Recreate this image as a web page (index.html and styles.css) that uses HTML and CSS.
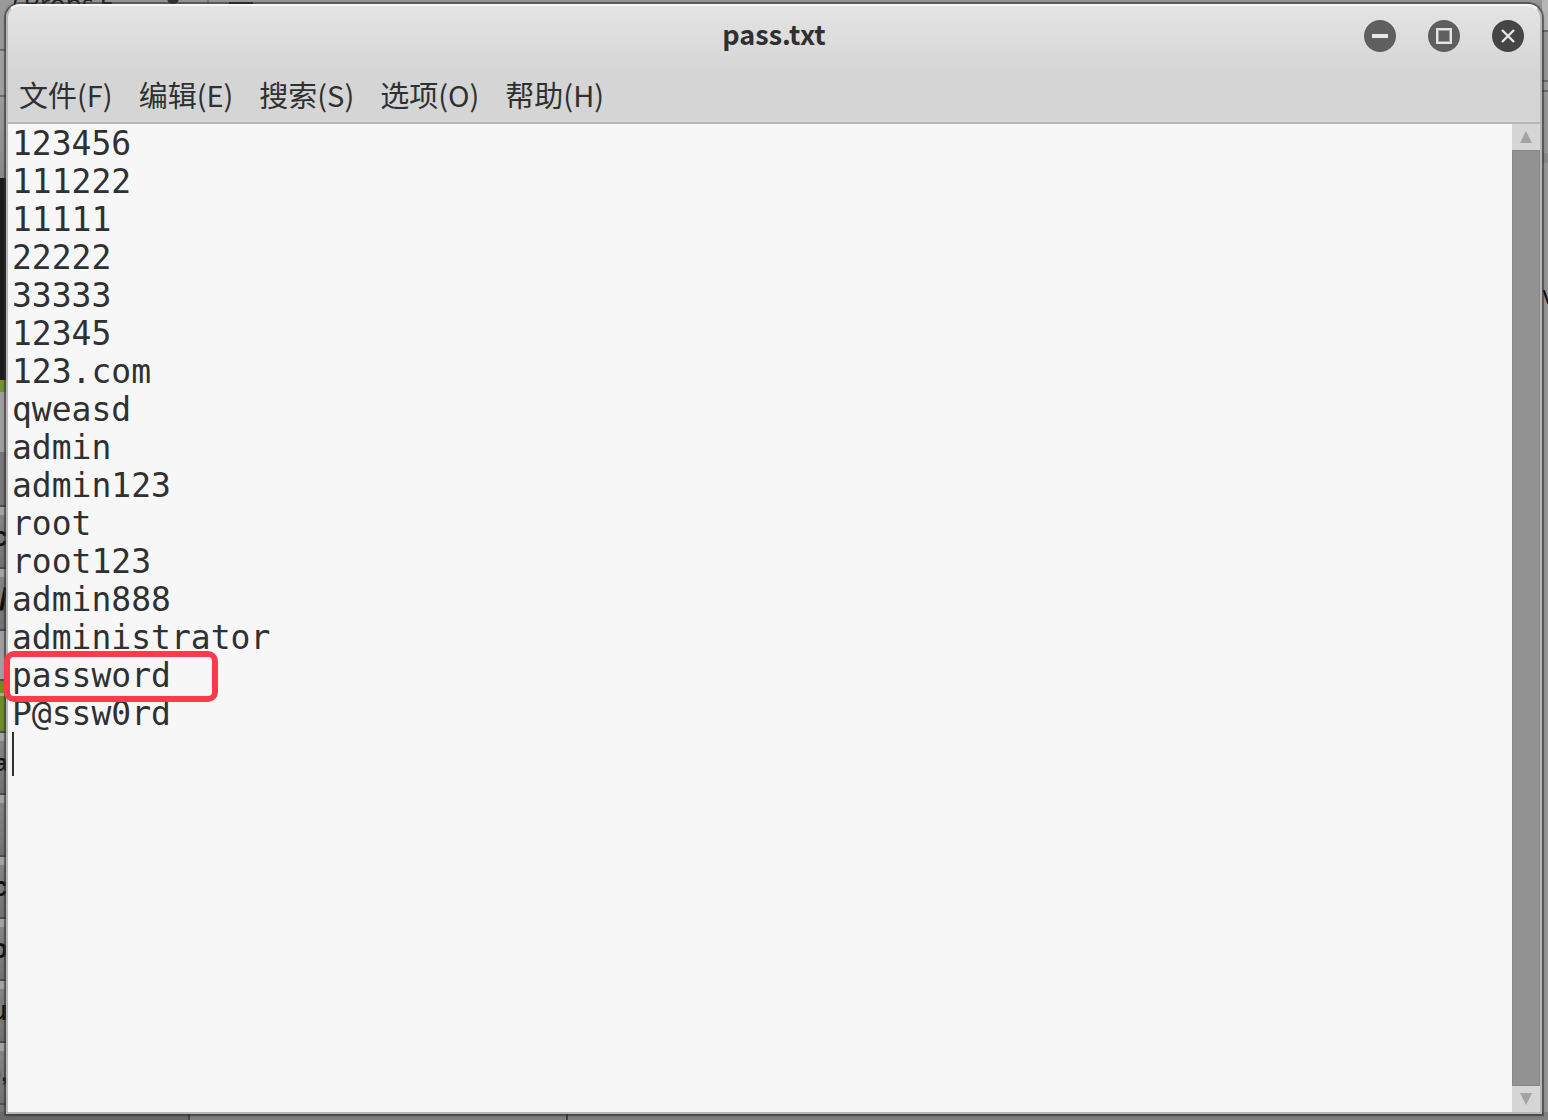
FILE: index.html
```html
<!DOCTYPE html>
<html lang="zh-CN">
<head>
<meta charset="utf-8">
<meta name="viewport" content="width=device-width, initial-scale=1">
<title>pass.txt</title>
<link rel="stylesheet" href="styles.css">
</head>
<body>
<div class="desktop" aria-hidden="true">
  <div class="behind-top"><span>y Props E</span><span class="dot"></span><span class="sep"></span><span class="plus"></span></div>
  <div class="behind-left">
    <div class="pane pane-a"></div>
    <div class="pane pane-b"></div>
    <div class="pane pane-c"></div>
    <div class="pane terminal"></div>
    <div class="pane accent"></div>
    <div class="pane light"></div>
    <div class="pane mid"></div>
    <div class="row">c</div>
    <div class="row slant">/</div>
    <div class="pane blank"></div>
    <div class="pane selected"></div>
    <div class="row tail">a</div>
    <div class="row"></div>
    <div class="row">c</div>
    <div class="row">o</div>
    <div class="row">u</div>
    <div class="row tail">),</div>
    <div class="pane rest"></div>
  </div>
  <div class="behind-right">
    <div class="side side-a"></div>
    <div class="side side-b"></div>
    <div class="side side-c"></div>
    <div class="side side-d"></div>
    <div class="side side-e">v</div>
  </div>
  <div class="behind-bottom"><i class="tab tab-a"></i><i class="tab tab-b"></i></div>
</div>
<main class="window">
  <header class="titlebar">
    <h1 class="title">pass.txt</h1>
    <div class="controls">
      <button class="control" type="button" aria-label="最小化"><svg viewBox="0 0 32 32"><circle cx="16" cy="16" r="16" fill="#5f5f5f"/><path d="M8 16h16" stroke="#e8e8e8" stroke-width="4"/></svg></button>
      <button class="control" type="button" aria-label="最大化"><svg viewBox="0 0 32 32"><circle cx="16" cy="16" r="16" fill="#5f5f5f"/><rect x="9" y="9" width="14" height="14" fill="none" stroke="#e3e3e3" stroke-width="2"/><rect x="10.500" y="10.500" width="11" height="11" fill="#5f5f5f" stroke="#a0a0a0" stroke-width="1"/></svg></button>
      <button class="control" type="button" aria-label="关闭"><svg viewBox="0 0 32 32"><circle cx="16" cy="16" r="16" fill="#454545"/><path d="M10 10l12 12M22 10L10 22" stroke="#e8e8e8" stroke-width="2.4"/></svg></button>
    </div>
  </header>
  <nav class="menubar">
    <button class="menu" type="button">文件(F)</button>
    <button class="menu" type="button">编辑(E)</button>
    <button class="menu" type="button">搜索(S)</button>
    <button class="menu" type="button">选项(O)</button>
    <button class="menu" type="button">帮助(H)</button>
  </nav>
  <div class="content">
    <textarea class="editor" aria-label="pass.txt" spellcheck="false">123456
111222
11111
22222
33333
12345
123.com
qweasd
admin
admin123
root
root123
admin888
administrator
password
P@ssw0rd
</textarea>
    <div class="highlight"></div>
    <div class="caret"></div>
    <div class="scrollbar">
      <button class="arrow" type="button" aria-label="向上滚动"><svg viewBox="0 0 12 12"><path d="M6 0l6 12H0z" fill="#a2a2a2"/></svg></button>
      <div class="thumb"></div>
      <button class="arrow" type="button" aria-label="向下滚动"><svg viewBox="0 0 12 12"><path d="M0 0h12L6 12z" fill="#a2a2a2"/></svg></button>
    </div>
  </div>
</main>
</body>
</html>
```
FILE: styles.css
```css
* {
  box-sizing: border-box;
}

body {
  margin: 0;
  min-height: 100vh;
  display: flex;
  padding: 4px 6px 6px;
  position: relative;
  background: #939393;
  font-family: "Noto Sans CJK SC", "Noto Sans", sans-serif;
  color: #2e3032;
}

button {
  border: 0;
  padding: 0;
  background: none;
  font: inherit;
  color: inherit;
}

svg {
  display: block;
  width: 100%;
}

/* Other windows showing round the edges */
.desktop {
  position: absolute;
  inset: 0;
  overflow: hidden;
}

.behind-top {
  position: absolute;
  inset: 0 0 auto;
  height: 12px;
  padding-left: 4px;
  display: flex;
  align-items: flex-end;
  background: #959595;
  font-size: 26px;
  line-height: 20px;
  color: #222;
}

.dot {
  width: 12px;
  height: 12px;
  margin: 0 28px 8px 52px;
  border-radius: 50%;
  background: #333;
}

.sep {
  width: 2px;
  height: 12px;
  margin-right: 20px;
  background: #777;
}

.plus {
  width: 24px;
  height: 2px;
  margin-bottom: 8px;
  background: #222;
}

.behind-left {
  position: absolute;
  inset: 0 auto 0 0;
  width: 14px;
  display: flex;
  flex-direction: column;
}

.pane-a { height: 49px; background: #999; }
.pane-b { height: 46px; background: #a0a0a0; border-top: 2px solid #6e6e6e; }
.pane-c { height: 83px; background: linear-gradient(#9c9c9c, #8a8a8a); border-top: 2px solid #6e6e6e; }
.terminal { height: 202px; background: #1c1c1c; }
.accent { height: 12px; background: #76932a; }
.light { height: 60px; background: #a0a0a0; }
.mid { height: 53px; background: #787878; }

.row {
  height: 62px;
  width: 8px;
  padding-top: 8px;
  display: flex;
  justify-content: flex-end;
  overflow: hidden;
  border-top: 2px solid #4c505e;
  background: linear-gradient(#a5a5a7 8px, #858585 8px, #727272);
  font-family: "Liberation Sans", sans-serif;
  font-weight: 700;
  font-size: 28px;
  line-height: 44px;
  color: #111;
}

.slant { font-size: 32px; }
.tail { font-size: 24px; }
.blank { height: 50px; background: #a0a0a2; border-top: 2px solid #4c505e; }
.selected { height: 52px; background: linear-gradient(#6f8f22 12px, #a5b578 12px 15px, #6f8f22 15px); border-top: 2px solid #4c505e; }
.rest { flex: 1; background: #777; border-top: 2px solid #4c505e; }

.behind-right {
  position: absolute;
  inset: 0 0 0 auto;
  width: 6px;
  display: flex;
  flex-direction: column;
  overflow: hidden;
}

.side { background: #979797; border-top: 2px solid #6b6b6b; }
.side-a { height: 30px; background: #b5b5b5; border: 0; }
.side-b { height: 50px; }
.side-c { height: 10px; }
.side-d { height: 63px; }
.side-e { flex: 1; padding-top: 114px; font-size: 26px; line-height: 32px; color: #111; border-top-width: 10px; border-top-color: #8a8a8a; }

.behind-bottom {
  position: absolute;
  inset: auto 0 0;
  height: 8px;
  display: flex;
  background: #828282;
}

.tab { border-right: 2px solid #454545; }
.tab-a { width: 190px; background: #6a6a6a; }
.tab-b { width: 378px; }

/* Editor window */
.window {
  position: relative;
  flex: 1;
  display: flex;
  flex-direction: column;
  border: 2px solid #b6b6b6;
  border-top: 2px solid #f6f6f6;
  border-radius: 14px 14px 0 0;
  background: linear-gradient(#e4e4e4, #d5d5d5 68px);
  box-shadow: 0 0 0 2px rgb(50 50 50 / 55%), 0 1px 4px rgb(40 40 40 / 50%);
}

.titlebar {
  height: 60px;
  display: grid;
  grid-template-columns: 1fr auto 1fr;
  align-items: center;
  padding: 0 16px;
}

.title {
  grid-column: 2;
  margin: 0;
  padding-bottom: 4px;
  font-size: 27px;
  line-height: 36px;
  font-weight: 700;
}

.controls {
  display: flex;
  justify-content: flex-end;
  gap: 32px;
}

.control {
  width: 32px;
  height: 32px;
}

.menubar {
  display: flex;
  gap: 26px;
  height: 58px;
  padding: 0 11px;
  align-items: center;
  border-bottom: 2px solid #b6b6b6;
}

.menu {
  font-size: 29px;
  line-height: 40px;
}

.content {
  position: relative;
  flex: 1;
  display: flex;
  background: #f7f7f7;
}

.editor {
  flex: 1;
  min-width: 0;
  margin: 0;
  padding: 1px 4px 0;
  border: 0;
  outline: 0;
  resize: none;
  overflow: hidden;
  background: transparent;
  color: #2e3032;
  font-family: "DejaVu Sans Mono", monospace;
  font-size: 33px;
  line-height: 38px;
}

.highlight {
  position: absolute;
  left: -4px;
  top: 527px;
  width: 214px;
  height: 51px;
  border: 6px solid #fb3b4b;
  border-radius: 10px;
}

.caret {
  position: absolute;
  left: 4px;
  top: 608px;
  width: 2px;
  height: 44px;
  background: #2e3032;
}

.scrollbar {
  width: 28px;
  display: flex;
  flex-direction: column;
  background: #d6d6d6;
}

.arrow {
  height: 26px;
  display: grid;
  place-items: center;
}

.arrow svg {
  width: 12px;
}

.thumb {
  flex: 1;
  background: #929292;
  border: 1px solid #888;
}
```
